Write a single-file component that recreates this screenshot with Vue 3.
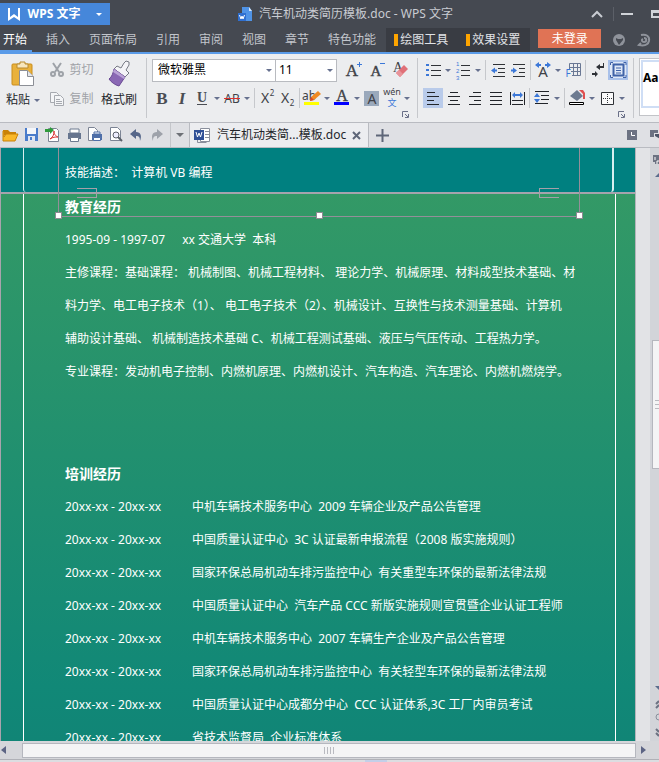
<script setup>
import { ref } from 'vue'

const menus = ['开始', '插入', '页面布局', '引用', '审阅', '视图', '章节', '特色功能']
const contextMenus = ['绘图工具', '效果设置']
const activeMenu = ref('开始')

const line = (d, c = '#2f3237', w = 1) => `<path d="${d}" fill="none" stroke="${c}" stroke-width="${w}"/>`
const serif = 'font-family="Liberation Serif" font-weight="bold" fill="#4a4d53" text-anchor="middle"'
const sans = 'font-family="Noto Sans" fill="#3f4248" text-anchor="middle"'
const blue = '#3c78d8'

const icons = {
  bold: `<text x="10" y="16" font-size="17" ${serif}>B</text>`,
  italic: `<text x="10" y="16" font-size="17" font-style="italic" ${serif}>I</text>`,
  underline: `<text x="10" y="14" font-size="14" ${serif}>U</text>${line('M5 16.5H15', '#4a4d53')}`,
  strike: `<text x="10" y="15" font-size="12" ${sans}>AB</text>${line('M2 10.5H18', '#e03030')}`,
  sup: `<text x="8" y="15" font-size="14" ${sans}>X</text><text x="15" y="8" font-size="8" ${sans}>2</text>`,
  sub: `<text x="8" y="15" font-size="14" ${sans}>X</text><text x="15" y="18" font-size="8" ${sans}>2</text>`,
  highlight: `<text x="7" y="12" font-size="12" ${sans}>ab</text><path d="M8 13l1-4 7-6 3 3-7 6z" fill="#f08a24"/><path d="M8 13l1-4 3 3z" fill="#d84a2a"/><path d="M2 14h15v3H2z" fill="#ffff00"/>`,
  fontColor: `<text x="10" y="13" font-size="16" font-family="Liberation Serif" fill="#3f4248" stroke="#3f4248" stroke-width=".4" text-anchor="middle">A</text><path d="M2 14h15v3H2z" fill="#0000ff"/>`,
  shade: `<path d="M2 3h15v15H2z" fill="#9aa9bc"/><text x="10" y="16" font-size="14" ${sans}>A</text>`,
  pinyin: `<text x="10" y="7" font-size="9" ${sans}>wén</text><text x="10" y="18" font-size="9" font-family="Noto Sans CJK SC" fill="${blue}" text-anchor="middle">文</text>`,
  grow: `<text x="9" y="16" font-size="17" font-family="Liberation Serif" fill="#3f4248" stroke="#3f4248" stroke-width=".4" text-anchor="middle">A</text>${line('M14 4.500H19M16.500 2V7', blue)}`,
  shrink: `<text x="9" y="16" font-size="15" font-family="Liberation Serif" fill="#3f4248" stroke="#3f4248" stroke-width=".4" text-anchor="middle">A</text>${line('M13 3.500H18', blue)}`,
  eraser: `<text x="7" y="12" font-size="14" font-family="Liberation Serif" fill="#3f4248" text-anchor="middle">A</text><path d="M5 13l8-8 4 4-8 8z" fill="#e07078"/><path d="M5 13l3-3 4 4-3 3z" fill="#e8949a"/>`,
  bullets: `<path d="M3 4h3v2H3zM3 9h3v2H3zM3 14h3v2H3z" fill="${blue}"/>${line('M8 5.5H18M8 10.5H18M8 15.5H18')}`,
  numbers: `<g font-family="Liberation Sans" font-size="6" fill="${blue}"><text x="3" y="6">1</text><text x="3" y="13">2</text><text x="3" y="20">3</text></g>${line('M8 5.5H17M8 10.5H17M8 15.5H17')}`,
  outdent: `${line('M5 4.5H17M10 8.500H17M10 12.500H17M5 16.500H17')}<path d="M3 10.500l4-3v2h2v2H7v2z" fill="${blue}"/>`,
  indent: `${line('M5 4.500H17M11 8.500H17M11 12.500H17M5 16.500H17')}<path d="M9 10.500l-4-3v2H3v2h2v2z" fill="${blue}"/>`,
  charWidth: `<text x="10" y="17" font-size="15" ${sans}>A</text><path d="M2 5l4-3v2h2v2H6v2zM18 5l-4-3v2h-2v2h2v2z" fill="${blue}"/>`,
  grid: `${line('M6.500 3.500H17.500V15.500M6.500 3.500V9M6.500 7.500H17.500M8 11.500H17.500M9 15.500H17.500M10.500 3.500V15.500M14.500 3.500V15.500', '#6a7894')}<text x="5" y="17" font-size="10" font-family="Noto Sans" fill="${blue}" text-anchor="middle">F</text>`,
  marks: `<path d="M8 7l4-3v2h3V3h1v5h-4v2z" fill="#2f3237"/><path d="M10 14l-3-3v2H4v2h3v2z" fill="#2f3237"/>`,
  frame: `<g fill="none" stroke="#3f62a8"><path d="M5.500 4.500h10v11h-10z" stroke-width="2"/><path d="M8 8h5M8 10.500h5M8 13h5"/><path d="M2.500 5V2.500H5M15.500 2.500H18V5M2.500 15v2.500H5M18 15v2.500h-3"/></g>`,
  left: line('M4 4.500H12M4 8.500H16M4 12.500H11M4 16.500H16', '#22252a'),
  center: line('M6 4.500H14M4 8.500H16M6 12.500H14M4 16.500H16', '#22252a'),
  right: line('M8 4.500H16M4 8.500H16M9 12.500H16M4 16.500H16', '#22252a'),
  justify: line('M4 4.500H16M4 8.500H16M4 12.500H16M4 16.500H16', '#22252a'),
  distribute: `${line('M3.500 4V17M17.500 4V17M5 12.500H16M5 16.500H16', '#22252a')}<path d="M5 7l3-3v2h5V4l3 3-3 3V8H8v2z" fill="${blue}"/>`,
  spacing: `${line('M9 7.500H17M9 11.500H17M3 15.500H16M3 3.500H17', '#22252a')}<path d="M5 5l3 4H2zM5 15l3-4H2z" fill="${blue}"/>`,
  fill: `<path d="M3 8l7-6 6 6-6 5z" fill="#6d7a90"/><path d="M12 2h4l2 3v6h-2V6z" fill="#e05050"/><path d="M2.500 14.500h14v2h-14z" fill="#fff" stroke="#000"/>`,
  border: `<path d="M4.500 4.500h12v12h-12z" fill="#fafafa" stroke="#2f3237"/><path d="M10.500 6v10M6 10.500h10" stroke="#2f3237" stroke-dasharray="1 1"/>`,
  open: `<path d="M2 5h5l2 2h6v3H2z" fill="#c98208"/><path d="M2 16V6h1v6l2-3h12l-3 7z" fill="#f9b82a" stroke="#c98208"/>`,
  save: `<path d="M3 3h13v13H3z" fill="#4a7ccb"/><path d="M5 3h9v6H5z" fill="#f4f6fa"/><path d="M6 11h7v5H6z" fill="#dfe6f2"/><path d="M8 12h2v3H8z" fill="#4a7ccb"/>`,
  pdf: `<path d="M5.500 3.500h8l2 2v11h-10z" fill="#fff" stroke="#7c8494"/><path d="M7 14c3-2 4-4 4-8 0 4 2 5 4 6-3 0-5 0-8 2z" fill="none" stroke="#d83030"/><path d="M2 7V4h5V2l4 3-4 4V7z" fill="#2f9a3c"/>`,
  print: `<path d="M6 4h9v4H6z" fill="#fff" stroke="#6d7a90"/><path d="M4 8h13v6H4z" fill="#66758f"/><path d="M6.500 12.500h8v4h-8z" fill="#fff" stroke="#6d7a90"/>`,
  printSet: `<path d="M3.500 2.500h6l3 3v10h-9z" fill="#fff" stroke="#7c8494"/><path d="M7 9h10v6H7z" fill="#4f6fa8"/><path d="M9 7h6v2H9zM8.500 12.500h7v3h-7z" fill="#fff" stroke="#4f6fa8"/>`,
  preview: `<path d="M4.500 2.500h7l3 3v10h-10z" fill="#fff" stroke="#7c8494"/><circle cx="10" cy="10" r="3" fill="#eef" stroke="#5a5f68"/><path d="M12 12l4 4" stroke="#5a5f68" stroke-width="2"/>`,
  undo: `<path d="M3 9l6-5v3c5 0 6 4 4 9 0-4-1-5-4-5v3z" fill="#56678a"/>`,
  redo: `<path d="M15 9l-6-5v3c-5 0-6 4-4 9 0-4 1-5 4-5v3z" fill="#9ea2aa"/>`,
  cut: `<g fill="none" stroke="#9ea2a8" stroke-width="2"><path d="M5 3l6 9M13 3l-6 9"/><circle cx="5" cy="14" r="2"/><circle cx="13" cy="14" r="2"/></g>`,
  copy: `<path d="M2.500 3.500h6l2 2v8h-8z" fill="#f4f5f7" stroke="#a6a9af"/><path d="M6.500 6.500h6l3 3v7h-9z" fill="#f4f5f7" stroke="#a6a9af"/><path d="M8 10.500h4M8 12.500h6M8 14.500h6" stroke="#a6a9af"/>`,
}

const A = 'arrow'
const S = 'sep'
const fontRow = [
  ['bold', '加粗'], ['italic', '倾斜'], ['underline', '下划线'], [A], ['strike', '删除线'], [A], [S],
  ['sup', '上标'], ['sub', '下标'], [S], ['highlight', '突出显示'], [A], ['fontColor', '字体颜色'], [A],
  ['shade', '字符底纹'], ['pinyin', '拼音指南'], [A],
]
const paraTop = [
  ['bullets', '项目符号'], [A], ['numbers', '编号'], [A], [S], ['outdent', '减少缩进量'], ['indent', '增加缩进量'], [S],
  ['charWidth', '中文版式'], [A], ['grid', '插入表格'], [S], ['marks', '显示标记'], ['frame', '显示段落', true],
]
const alignRow = [
  ['left', '左对齐', true], ['center', '居中'], ['right', '右对齐'], ['justify', '两端对齐'], ['distribute', '分散对齐'],
]
const paraBottom = [[S], ['spacing', '行距'], [A], [S], ['fill', '底纹颜色'], [A], ['border', '边框'], [A]]
const quick = [
  ['open', '打开'], ['save', '保存'], ['pdf', '输出为PDF'], ['print', '打印'],
  ['printSet', '打印设置'], ['preview', '打印预览'], ['undo', '撤销'], ['redo', '恢复'],
]

const skill = '技能描述：  计算机 VB 编程'
const school = { period: '1995-09 - 1997-07', name: 'xx 交通大学  本科' }
const courses = [
  '主修课程：基础课程： 机械制图、机械工程材料、 理论力学、机械原理、材料成型技术基础、材',
  '料力学、电工电子技术（1）、 电工电子技术（2）、机械设计、互换性与技术测量基础、计算机',
  '辅助设计基础、 机械制造技术基础 C、机械工程测试基础、液压与气压传动、工程热力学。',
  '专业课程：发动机电子控制、内燃机原理、内燃机设计、汽车构造、汽车理论、内燃机燃烧学。',
]
const trainings = [
  '中机车辆技术服务中心  2009 车辆企业及产品公告管理',
  '中国质量认证中心  3C 认证最新申报流程（2008 版实施规则）',
  '国家环保总局机动车排污监控中心  有关重型车环保的最新法律法规',
  '中国质量认证中心  汽车产品 CCC 新版实施规则宣贯暨企业认证工程师',
  '中机车辆技术服务中心  2007 车辆生产企业及产品公告管理',
  '国家环保总局机动车排污监控中心  有关轻型车环保的最新法律法规',
  '中国质量认证中心成都分中心  CCC 认证体系,3C 工厂内审员考试',
  '省技术监督局  企业标准体系',
]
</script>

<template>
  <div class="app">
    <header class="title-bar">
      <button class="brand">
        <svg width="12" height="13" viewBox="0 0 12 13" aria-hidden="true"><path d="M0 0h2v9l4-3 4 3V0h2v13L6 9 0 13z" fill="#fff" /></svg>
        <span>WPS 文字</span>
        <i class="caret light"></i>
      </button>
      <div class="doc-title">
        <svg width="15" height="15" viewBox="0 0 15 15" aria-hidden="true">
          <path d="M4 0h7l3 4v10H4z" fill="#4f93e6" /><path d="M11 0l3 4h-3z" fill="#d5e6fb" />
          <path d="M0 6h8v8H0z" fill="#2f6fd0" /><path d="M1.500 8l1.500 4 1-3 1 3 1.500-4" fill="none" stroke="#fff" />
        </svg>
        <h1>汽车机动类简历模板.doc - WPS 文字</h1>
      </div>
      <div class="window-buttons">
        <button aria-label="隐藏功能区"><svg width="13" height="8" viewBox="0 0 13 8"><path d="M1 7l5-5 5 5" fill="none" stroke="#c9ccd2" stroke-width="2" /></svg></button>
        <i class="title-sep"></i>
        <button aria-label="最小化"><svg width="13" height="8" viewBox="0 0 13 8"><path d="M0 4h12" stroke="#d0d3d8" stroke-width="2" /></svg></button>
        <button aria-label="最大化"><svg width="13" height="8" viewBox="0 0 13 8"><path d="M1 1h11v6H1zM1 2h11" fill="none" stroke="#d0d3d8" stroke-width="2" /></svg></button>
      </div>
    </header>

    <nav class="menu">
      <button v-for="m in menus" :key="m" :class="{ active: m === activeMenu }" @click="activeMenu = m">{{ m }}</button>
      <div class="context">
        <button v-for="m in contextMenus" :key="m"><i class="mark"></i>{{ m }}</button>
      </div>
      <button class="login">未登录</button>
      <div class="menu-icons">
        <button aria-label="皮肤"><svg width="13" height="13" viewBox="0 0 13 13"><circle cx="6" cy="6" r="6" fill="#8f939b" /><path d="M3 4l2 1h3l2-1v2l-4 5-3-5z" fill="#464a52" /></svg></button>
        <button aria-label="反馈"><svg width="13" height="13" viewBox="0 0 13 13"><path d="M3 1c5-1 9 1 8 6-1 4-5 5-10 4l2-2M6 4c3 0 3 4 0 4-2 0-3-2-1-3" fill="none" stroke="#8f939b" stroke-width="2" /></svg></button>
      </div>
    </nav>

    <section class="ribbon">
      <div class="group clipboard">
        <button class="big paste">
          <svg width="24" height="26" viewBox="0 0 24 26" aria-hidden="true">
            <rect x="1" y="3" width="20" height="21" rx="1" fill="#e9b13c" stroke="#c98d1c" />
            <path d="M6 3h3V1h5v2h3v4H6z" fill="#f7e6bd" stroke="#b98a2c" />
            <path d="M8.500 9.500h8l6 6v9h-14z" fill="#fff" stroke="#8c8f96" /><path d="M16.500 9.500v6h6" fill="#e4e6ea" stroke="#8c8f96" />
          </svg>
          <span>粘贴<i class="caret"></i></span>
        </button>
        <div class="stack">
          <button disabled><svg width="20" height="20" viewBox="0 0 20 20" v-html="icons.cut"></svg>剪切</button>
          <button disabled><svg width="20" height="20" viewBox="0 0 20 20" v-html="icons.copy"></svg>复制</button>
        </div>
        <button class="big">
          <svg width="24" height="26" viewBox="0 0 24 26" aria-hidden="true">
            <path d="M17 2l2-2 3 1v3l-3 5 3 3-4 4-11-8 3-3 4 2z" fill="#f4f4f7" stroke="#777a84" />
            <path d="M7 8l11 8-6 9c-4-1-8-4-10-7 3-2 4-6 5-10z" fill="#8a68b4" stroke="#6a4a94" /><path d="M7 8l11 8-1 2L6 11z" fill="#b9a2d6" />
          </svg>
          <span>格式刷</span>
        </button>
      </div>

      <div class="group font">
        <div class="row">
          <label class="combo family"><select aria-label="字体"><option>微软雅黑</option></select><i class="caret"></i></label>
          <label class="combo size"><select aria-label="字号"><option>11</option></select><i class="caret"></i></label>
          <button class="tool wide" aria-label="增大字号"><svg width="20" height="20" viewBox="0 0 20 20" v-html="icons.grow"></svg></button>
          <button class="tool wide" aria-label="减小字号"><svg width="20" height="20" viewBox="0 0 20 20" v-html="icons.shrink"></svg></button>
          <button class="tool wide" aria-label="清除格式"><svg width="20" height="20" viewBox="0 0 20 20" v-html="icons.eraser"></svg></button>
        </div>
        <div class="row">
          <template v-for="([k, label], i) in fontRow" :key="i">
            <i v-if="k === 'sep'" class="sep"></i>
            <button v-else-if="k === 'arrow'" class="drop" aria-label="更多"><i class="caret"></i></button>
            <button v-else class="tool" :aria-label="label"><svg width="20" height="20" viewBox="0 0 20 20" v-html="icons[k]"></svg></button>
          </template>
        </div>
        <button class="launcher" aria-label="字体设置"><svg width="7" height="7" viewBox="0 0 7 7"><path d="M.5 6V.5H6M6.500 3v3.500H3M3 3l3 3" fill="none" stroke="#6a7088" /></svg></button>
      </div>

      <div class="group para">
        <div class="row">
          <template v-for="([k, label, on], i) in paraTop" :key="i">
            <i v-if="k === 'sep'" class="sep"></i>
            <button v-else-if="k === 'arrow'" class="drop" aria-label="更多"><i class="caret"></i></button>
            <button v-else class="tool" :class="{ on, framed: on }" :aria-label="label"><svg width="20" height="20" viewBox="0 0 20 20" v-html="icons[k]"></svg></button>
          </template>
        </div>
        <div class="row">
          <div class="aligns">
            <button v-for="[k, label, on] in alignRow" :key="k" class="tool" :class="{ on }" :aria-label="label"><svg width="20" height="20" viewBox="0 0 20 20" v-html="icons[k]"></svg></button>
          </div>
          <template v-for="([k, label], i) in paraBottom" :key="i">
            <i v-if="k === 'sep'" class="sep"></i>
            <button v-else-if="k === 'arrow'" class="drop" aria-label="更多"><i class="caret"></i></button>
            <button v-else class="tool" :aria-label="label"><svg width="20" height="20" viewBox="0 0 20 20" v-html="icons[k]"></svg></button>
          </template>
        </div>
        <button class="launcher" aria-label="段落设置"><svg width="7" height="7" viewBox="0 0 7 7"><path d="M.5 6V.5H6M6.500 3v3.500H3M3 3l3 3" fill="none" stroke="#6a7088" /></svg></button>
      </div>

      <div class="gallery"><button>Aa</button></div>
    </section>

    <section class="doc-tabs">
      <div class="quick">
        <button v-for="[k, label] in quick" :key="k" :aria-label="label"><svg width="20" height="20" viewBox="0 0 20 20" v-html="icons[k]"></svg></button>
        <i class="quick-sep"></i>
        <button class="more" aria-label="自定义"><i class="caret grey"></i></button>
      </div>
      <div class="doc-tab">
        <svg width="17" height="17" viewBox="0 0 17 17" aria-hidden="true">
          <path d="M6.500 1.500h9v13h-9z" fill="#fff" stroke="#8a8f9c" /><path d="M11 4.500h4M11 7.500h4M11 10.500h4" stroke="#8a8f9c" />
          <path d="M0 3h10v10H0z" fill="#2f4f96" /><path d="M2 5l1.500 5L5 6l1.500 4L8 5" fill="none" stroke="#fff" /><path d="M3.500 13v2.500h9" fill="none" stroke="#8a8f9c" />
        </svg>
        <span>汽车机动类简...模板.doc</span>
        <button aria-label="关闭"><svg width="9" height="9" viewBox="0 0 9 9"><path d="M1 1l7 7M8 1L1 8" stroke="#5e6678" stroke-width="2" /></svg></button>
      </div>
      <button class="new-tab" aria-label="新建"><svg width="13" height="13" viewBox="0 0 13 13"><path d="M0 6.500h13M6.500 0v13" stroke="#5e6678" stroke-width="2" /></svg></button>
      <div class="tab-tools">
        <button aria-label="历史"><svg width="10" height="10" viewBox="0 0 10 10"><path d="M0 0h10v10H0z" fill="#6c7282" /><path d="M4.500 2v3.500H8" fill="none" stroke="#fff" /></svg></button>
        <button aria-label="窗口"><svg width="12" height="10" viewBox="0 0 12 10"><path d="M0 0h8v3H4v4H0z" fill="#6c7282" /><path d="M5 4h7v6L5 6z" fill="#4e5668" /></svg></button>
      </div>
    </section>

    <main class="workspace">
      <article class="page">
        <section class="skills">
          <div class="inner"><p>{{ skill }}</p></div>
        </section>
        <section class="history">
          <div class="inner">
            <h2>教育经历</h2>
            <p class="school"><span>{{ school.period }}</span><span>{{ school.name }}</span></p>
            <p v-for="c in courses" :key="c">{{ c }}</p>
            <h2 class="later">培训经历</h2>
            <p v-for="t in trainings" :key="t" class="entry"><span>20xx-xx - 20xx-xx</span><span>{{ t }}</span></p>
          </div>
        </section>
        <div class="selection" aria-hidden="true">
          <i class="handle"></i><i class="handle"></i><i class="handle"></i>
        </div>
        <i class="notch start"></i>
        <i class="notch end"></i>
      </article>
      <aside class="side">
        <svg class="side-top" width="9" height="26" viewBox="0 0 9 26" aria-hidden="true">
          <path d="M3 1h6v9H5V8H3z" fill="#6c7282" /><path d="M5 3v3M9 7h-2v3" stroke="#fff" fill="none" /><path d="M5 23h4v-4z" fill="#5c6c8c" />
        </svg>
        <div class="thumb-v"><i></i><i></i><i></i></div>
        <svg class="side-bottom" width="9" height="54" viewBox="0 0 9 54" aria-hidden="true">
          <path d="M5 1h4v4z" fill="#5c6c8c" /><path d="M9 16l-3 3M9 20l-3 3M6 44l3 3M6 48l3 3" stroke="#6c7282" stroke-width="2" /><circle cx="9" cy="32" r="3" fill="none" stroke="#8a8f9c" />
        </svg>
      </aside>
    </main>

    <footer class="hscroll">
      <button aria-label="向左"><svg width="5" height="8" viewBox="0 0 5 8"><path d="M5 0v8L0 4z" fill="#5c6484" /></svg></button>
      <div class="thumb-h"><i></i><i></i><i></i><i></i></div>
      <button aria-label="向右"><svg width="5" height="8" viewBox="0 0 5 8"><path d="M0 0v8l5-4z" fill="#5c6484" /></svg></button>
    </footer>
    <div class="status"><i></i></div>
  </div>
</template>

<style>
body { margin: 0; overflow: hidden; }
</style>

<style scoped>
* { box-sizing: border-box; }
.app {
  display: flex; flex-direction: column; height: 100vh; overflow: hidden;
  font: 12px/16px "Noto Sans", "Noto Sans CJK SC", sans-serif; color: #24262b; white-space: nowrap;
}
button { border: 0; padding: 0; margin: 0; background: none; font: inherit; color: inherit; display: flex; align-items: center; justify-content: center; flex: none; }
svg { display: block; flex: none; overflow: visible; }
.caret { display: inline-block; border: 3px solid transparent; border-top-color: #66718f; border-bottom: 0; }
.caret.light { border-top-color: #fff; }
.caret.grey { border-width: 4px 4px 0; border-top-color: #6d7076; }

.title-bar { display: flex; align-items: center; justify-content: space-between; height: 28px; flex: none; background: #454951; color: #c9ccd2; }
.brand { width: 110px; height: 22px; gap: 8px; background: #4687da; color: #fff; font-size: 12px; font-weight: bold; }
.brand .caret { margin-left: 8px; }
.doc-title { display: flex; align-items: center; gap: 6px; padding-right: 10px; }
.doc-title h1 { margin: 0; font-size: 12px; font-weight: normal; }
.window-buttons { display: flex; align-items: center; gap: 10px; width: 68px; flex: none; }
.window-buttons button { width: 13px; }
.window-buttons button:last-child { margin-left: 7px; }
.title-sep { width: 1px; height: 14px; background: #5c6068; flex: none; margin: 0 -3px 0 -1px; }

.menu { display: flex; align-items: stretch; height: 26px; flex: none; background: #454951; border-bottom: 2px solid #5a9be8; color: #c2c5cb; overflow: hidden; }
.menu > button { border: solid transparent; border-width: 2px 0; padding: 0 5px; margin: 0 9px 0 0; }
.menu > button:first-child { padding-left: 3px; }
.menu > button.active { color: #fff; border-bottom-color: #5a9be8; }
.context { display: flex; gap: 18px; padding: 0 10px 0 8px; margin-left: -4px; background: #393c43; color: #e0e2e6; }
.mark { width: 4px; height: 12px; margin-right: 2px; background: #ffa500; }
.menu > .login { width: 63px; height: 19px; margin: 1px 12px 0 8px; border: 0; background: #e07355; color: #fff; }
.menu-icons { display: flex; align-items: center; gap: 12px; }

.ribbon { display: flex; height: 68px; flex: none; background: #ecedef; overflow: hidden; }
.group { position: relative; display: flex; flex: none; margin: 4px 0; height: 60px; border-right: 1px solid #c6c8cc; }
.clipboard { width: 147px; gap: 6px; padding-left: 5px; }
.big { flex-direction: column; justify-content: flex-start; gap: 5px; padding-top: 3px; width: 36px; }
.big .caret { margin-left: 4px; vertical-align: 2px; }
.stack { display: flex; flex-direction: column; gap: 9px; padding-top: 2px; width: 48px; flex: none; color: #9fa2a7; }
.stack button { height: 20px; gap: 1px; }
.font, .para { flex-direction: column; }
.font { width: 271px; padding-left: 5px; gap: 6px; }
.para { width: 216px; padding: 2px 0 0 5px; gap: 8px; }
.row { display: flex; align-items: center; height: 20px; }
.font .row:first-child { height: 24px; }
.tool { width: 20px; height: 20px; }
.tool.wide { width: 24px; }
.size + .tool { margin-left: 4px; }
.tool.on { background: #b9cbea; }
.tool.framed { background: #dfe8f7; box-shadow: inset 0 0 0 2px #a9c1ea; }
.drop { width: 10px; height: 20px; }
.sep { width: 1px; height: 20px; margin: 0 2px; background: #c6c8cc; flex: none; }
.aligns { display: flex; gap: 1px; }
.combo { display: flex; align-items: center; height: 23px; background: #fff; border: 1px solid #b9bbc0; padding-right: 3px; }
.combo select { appearance: none; flex: 1; min-width: 0; height: 20px; border: 0; padding: 0 5px; background: none; font: inherit; color: #000; }
.family { width: 124px; }
.size { width: 62px; margin-left: -1px; }
.size select { padding-left: 3px; }
.launcher { position: absolute; right: 8px; bottom: 0; }
.gallery { flex: 1; min-width: 0; margin: 4px 0 6px 5px; border: 1px solid #c2c4c8; border-right: 0; background: #fff; }
.gallery button { height: 48px; margin: 1px; justify-content: flex-start; align-items: flex-start; padding-top: 8px; width: 60px; border: 2px solid #cfdef5; color: #000; font-weight: bold; }

.doc-tabs { display: flex; align-items: stretch; height: 26px; flex: none; background: #dfe0e4; border: 1px solid #b9bbc1; border-width: 1px 0; overflow: hidden; }
.quick { display: flex; align-items: center; width: 189px; flex: none; }
.quick button { width: 21px; }
.quick-sep { width: 1px; height: 24px; margin-left: 2px; background: #c4c6ca; }
.quick .more { width: 17px; }
.doc-tab { display: flex; align-items: center; gap: 6px; width: 180px; padding-left: 4px; background: #ecedf0; border: 1px solid #b9bbc1; border-width: 0 1px; }
.new-tab { width: 27px; }
.tab-tools { display: flex; align-items: center; gap: 13px; margin-left: auto; width: 32px; }

.workspace { display: flex; flex: 1; min-height: 0; background: #e2e3e6; border-left: 1px solid #a9a3ad; }
.page { position: relative; flex: 1; min-width: 0; margin-right: 14px; display: flex; flex-direction: column; border-right: 1px solid #b3b4ba; color: #fff; overflow: hidden; }
.page p, .page h2 { margin: 0; line-height: 33px; white-space: pre; }
.page p { font-size: 12px; }
.page h2 { font-size: 14px; height: 33px; }
.skills { display: flex; height: 46px; flex: none; padding: 0 21px 0 22px; background: #008080; border-bottom: 2px solid #a5a3ac; }
.skills .inner { flex: 1; padding: 8px 0 0 41px; border: solid #d7efef; border-width: 0 2px 0 1px; border-radius: 0 0 3px 3px; }
.history { display: flex; flex: 1; min-height: 0; padding: 0 19px 0 22px; background: linear-gradient(#339966, #118877 90%, #118576); }
.history .inner { flex: 1; min-width: 0; padding: 0 0 0 41px; border: solid #fff; border-width: 0 1px; }
.history .inner h2:first-child { margin-top: -4px; }
.history h2.later { margin-top: 69px; }
.school { display: flex; gap: 17px; }
.entry { display: grid; grid-template-columns: 127px 1fr; }

.selection { position: absolute; top: 0; left: 57px; right: 55px; height: 69px; border: 1px solid #948f99; border-top: 0; }
.handle { position: absolute; bottom: -3px; left: -4px; width: 7px; height: 7px; background: #fff; border: 1px solid #8c8a92; }
.handle:nth-child(2) { left: calc(50% - 3px); }
.handle:nth-child(3) { left: auto; right: -4px; }
.notch { position: absolute; top: 40px; width: 20px; height: 10px; border: 1px solid #a5a0a8; }
.notch.start { left: 76px; border-left: 0; }
.notch.end { right: 76px; border-right: 0; }

.side { display: flex; flex-direction: column; width: 9px; flex: none; background: #d2d4d9; }
.side-top { margin-top: 6px; }
.thumb-v { display: flex; flex-direction: column; justify-content: center; gap: 3px; align-items: flex-end; height: 129px; margin: 160px 0 auto 2px; background: #f4f4f5; border: 1px solid #b5b7be; border-right: 0; }
.thumb-v i { width: 4px; height: 1px; background: #b9bac0; }
.side-bottom { margin-bottom: 2px; }

.hscroll { display: flex; align-items: center; height: 19px; flex: none; background: #d5d6da; border-bottom: 1px solid #b0b1b7; padding-right: 8px; }
.hscroll button { width: 15px; height: 16px; }
.hscroll button:first-child { width: 22px; padding-right: 16px; }
.thumb-h { flex: 1; display: flex; align-items: center; justify-content: center; gap: 2px; height: 15px; background: #f4f4f5; border: 1px solid #b5b7be; }
.thumb-h i { width: 1px; height: 7px; background: #b9bac0; }
.status { height: 2px; flex: none; background: #dcdde1; display: flex; justify-content: center; }
.status i { width: 22px; height: 2px; margin-left: 92px; background: #c3cfe8; }
</style>
